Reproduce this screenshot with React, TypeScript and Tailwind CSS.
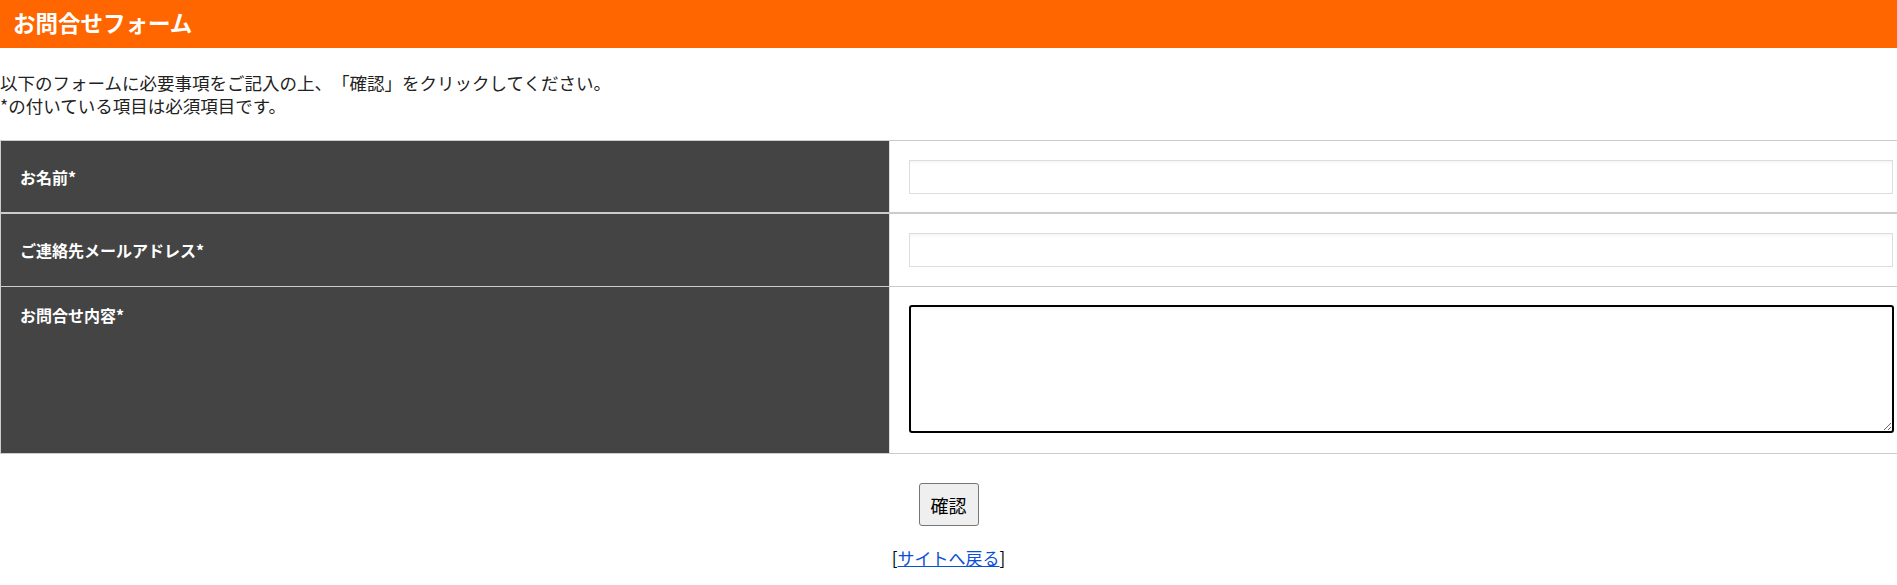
import React from "react";

const font = { fontFamily: '"Noto Sans CJK JP", "Noto Sans", sans-serif' };

function Label({ children, top }: { children: React.ReactNode; top?: boolean }) {
  return (
    <div
      className={
        "w-[889px] shrink-0 bg-[#444444] border-r border-[#dddddd] pl-[19px] flex " +
        (top ? "items-start pt-[16px]" : "items-center")
      }
    >
      <span className="text-white font-bold text-[16px] leading-[24px]">{children}</span>
    </div>
  );
}

export default function App() {
  return (
    <div className="w-full bg-white text-[#222] [text-spacing-trim:space-all]" style={font}>
      <div className="h-[48px] bg-[#ff6600] flex items-center pl-[13px] pb-[5px]">
        <h1 className="text-white font-bold text-[22.5px] leading-[30px]">お問合せフォーム</h1>
      </div>

      <div className="mt-[24px] text-[17.5px] leading-[22.5px]">
        <p>以下のフォームに必要事項をご記入の上、「確認」をクリックしてください。</p>
        <p>*の付いている項目は必須項目です。</p>
      </div>

      <div className="mt-[23px] border-t border-l border-[#cccccc]">
        <div className="flex border-b-2 border-[#cccccc]">
          <Label>お名前*</Label>
          <div className="flex-1 pl-[19px] pr-[4px] pt-[19px] pb-[18px]">
            <input
              type="text"
              className="block w-full h-[34px] border border-[#dddddd] bg-white shadow-[inset_0_4px_3px_-2px_rgba(0,0,0,0.04)] outline-none"
            />
          </div>
        </div>
        <div className="flex border-b border-[#cccccc]">
          <Label>ご連絡先メールアドレス*</Label>
          <div className="flex-1 pl-[19px] pr-[4px] pt-[19px] pb-[19px]">
            <input
              type="text"
              className="block w-full h-[34px] border border-[#dddddd] bg-white shadow-[inset_0_4px_3px_-2px_rgba(0,0,0,0.04)] outline-none"
            />
          </div>
        </div>
        <div className="flex border-b border-[#cccccc]">
          <Label top>お問合せ内容*</Label>
          <div className="flex-1 pl-[19px] pr-[3px] pt-[18px] pb-[20px]">
            <textarea className="block w-full h-[128px] border-2 border-black rounded-[3px] bg-white shadow-[inset_0_4px_3px_-2px_rgba(0,0,0,0.04)] outline-none" />
          </div>
        </div>
      </div>

      <div className="flex justify-center mt-[29px]">
        <button
          type="button"
          className="w-[60px] h-[43px] bg-[#efefef] border border-[#767676] rounded-[3px] text-[18px] text-black leading-none"
        >
          確認
        </button>
      </div>

      <div className="mt-[20px] text-center text-[17px] leading-[24px] text-black">
        [<a href="#" className="text-[#0b4fd8] underline">サイトへ戻る</a>]
      </div>
    </div>
  );
}
